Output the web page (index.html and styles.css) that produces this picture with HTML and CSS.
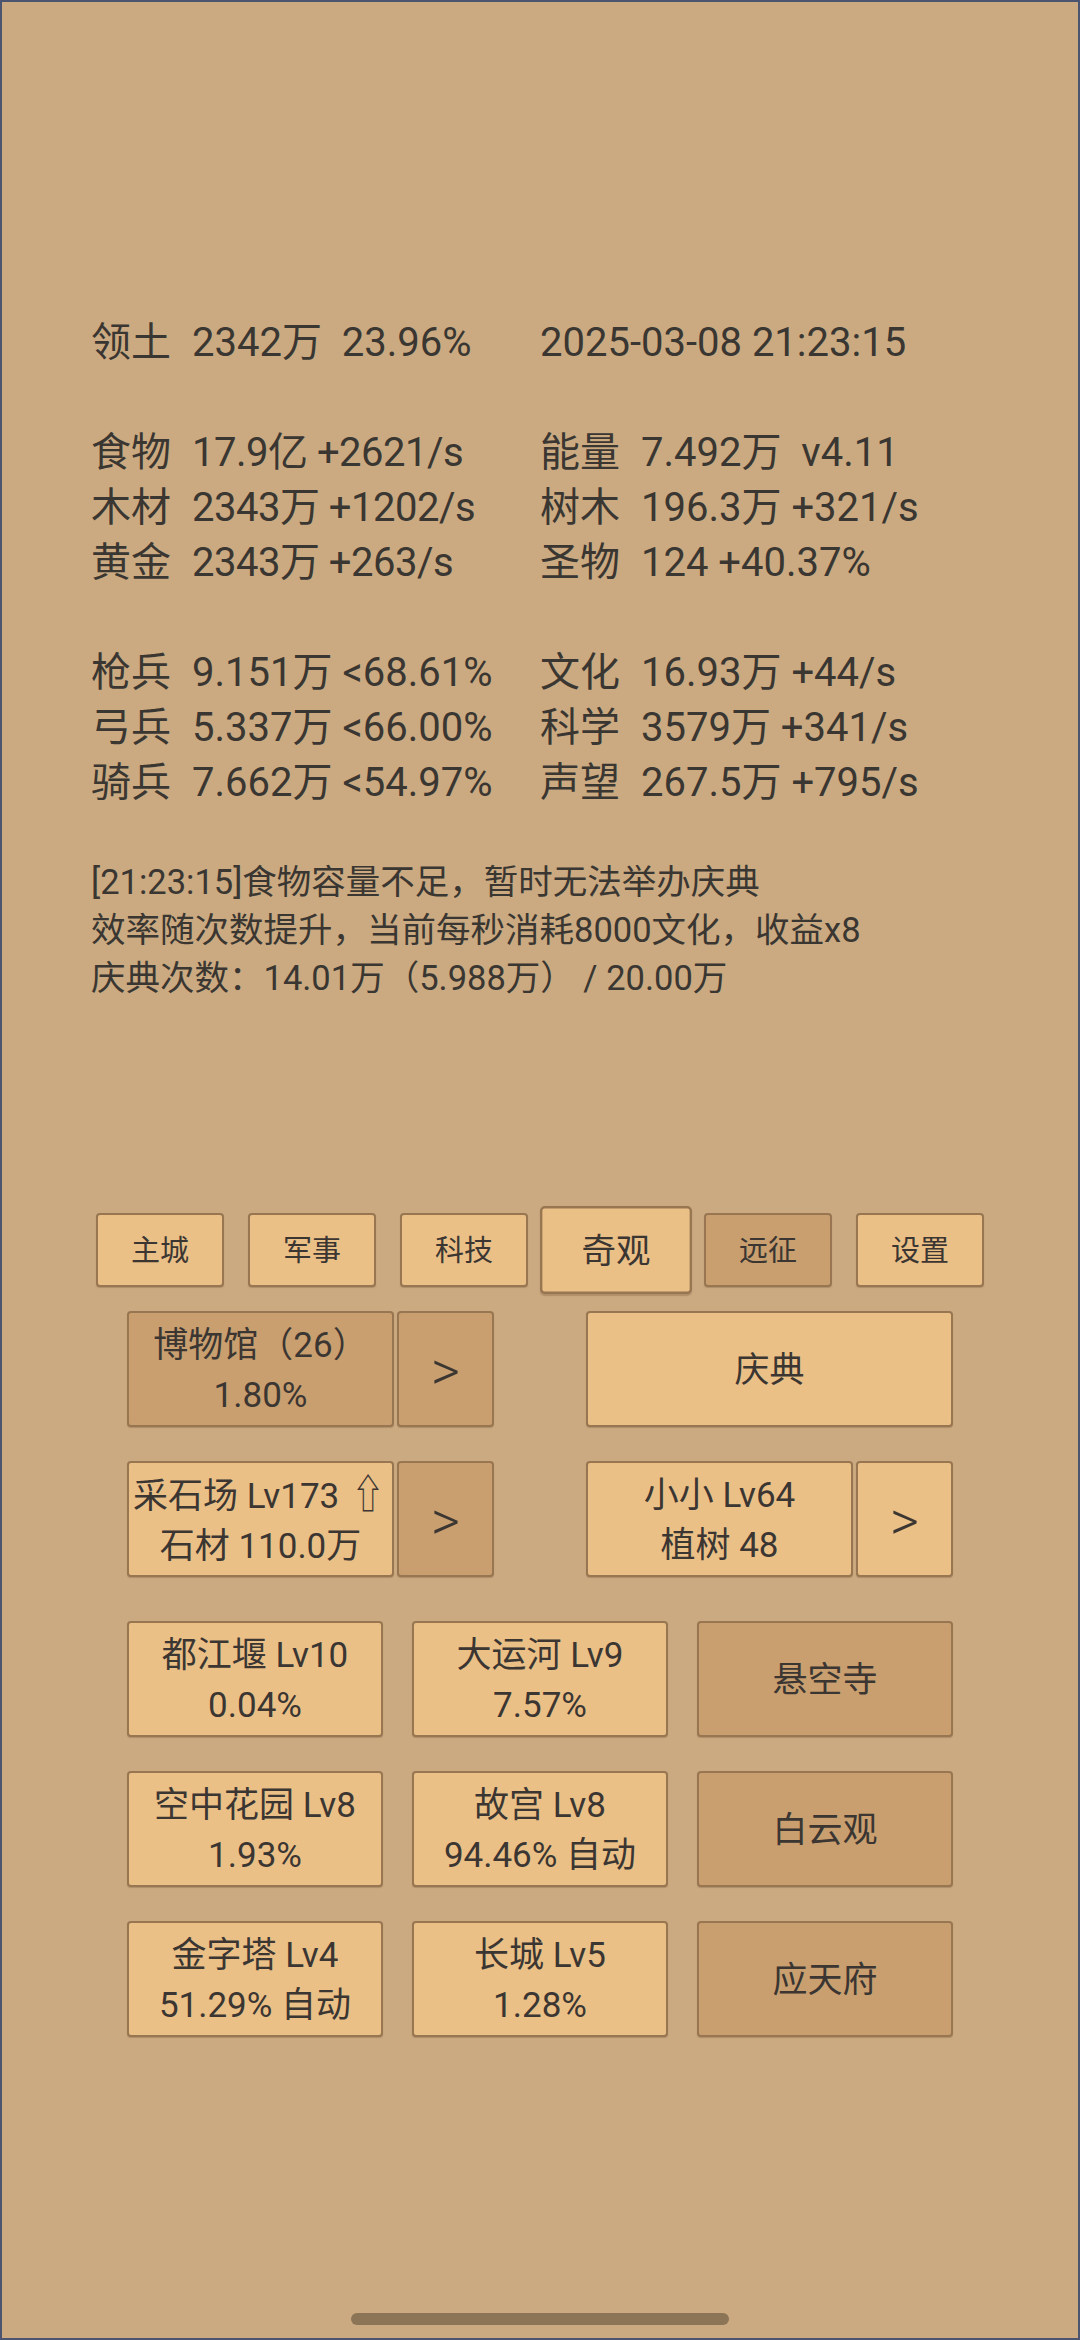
FILE: index.html
```html
<!DOCTYPE html>
<html lang="zh-CN">
<head>
<meta charset="utf-8">
<title>奇观</title>
<link rel="stylesheet" href="styles.css">
</head>
<body>
<div class="screen">
  <div class="stats">
    <div class="row">
      <div class="cell"><span class="lbl">领土</span><span class="val">2342万  23.96%</span></div>
      <div class="cell"><span class="val">2025-03-08 21:23:15</span></div>
    </div>
    <div class="row blank"></div>
    <div class="row">
      <div class="cell"><span class="lbl">食物</span><span class="val tight">17.9亿 +2621/s</span></div>
      <div class="cell"><span class="lbl">能量</span><span class="val">7.492万  v4.11</span></div>
    </div>
    <div class="row">
      <div class="cell"><span class="lbl">木材</span><span class="val tight">2343万 +1202/s</span></div>
      <div class="cell"><span class="lbl">树木</span><span class="val">196.3万 +321/s</span></div>
    </div>
    <div class="row">
      <div class="cell"><span class="lbl">黄金</span><span class="val tight">2343万 +263/s</span></div>
      <div class="cell"><span class="lbl">圣物</span><span class="val">124 +40.37%</span></div>
    </div>
    <div class="row blank"></div>
    <div class="row">
      <div class="cell"><span class="lbl">枪兵</span><span class="val">9.151万 &lt;68.61%</span></div>
      <div class="cell"><span class="lbl">文化</span><span class="val">16.93万 +44/s</span></div>
    </div>
    <div class="row">
      <div class="cell"><span class="lbl">弓兵</span><span class="val">5.337万 &lt;66.00%</span></div>
      <div class="cell"><span class="lbl">科学</span><span class="val">3579万 +341/s</span></div>
    </div>
    <div class="row">
      <div class="cell"><span class="lbl">骑兵</span><span class="val">7.662万 &lt;54.97%</span></div>
      <div class="cell"><span class="lbl">声望</span><span class="val">267.5万 +795/s</span></div>
    </div>
  </div>

  <div class="messages">
    <div class="msg">[21:23:15]食物容量不足，暂时无法举办庆典</div>
    <div class="msg">效率随次数提升，当前每秒消耗8000文化，收益x8</div>
    <div class="msg">庆典次数：14.01万（5.988万） / 20.00万</div>
  </div>

  <div class="tabs">
    <div class="slot"><div class="btn tab">主城</div></div>
    <div class="slot"><div class="btn tab">军事</div></div>
    <div class="slot"><div class="btn tab">科技</div></div>
    <div class="slot"><div class="btn tab selected">奇观</div></div>
    <div class="slot"><div class="btn tab dark">远征</div></div>
    <div class="slot"><div class="btn tab">设置</div></div>
  </div>

  <div class="pairs">
    <div class="pair-row">
      <div class="group">
        <div class="btn main dark"><span>博物馆（26）</span><span>1.80%</span></div>
        <div class="btn arrow dark">&gt;</div>
      </div>
      <div class="group">
        <div class="btn wide"><span>庆典</span></div>
      </div>
    </div>
    <div class="pair-row">
      <div class="group">
        <div class="btn main"><span>采石场 Lv173 <span class="up">⇧</span></span><span>石材 110.0万</span></div>
        <div class="btn arrow dark">&gt;</div>
      </div>
      <div class="group">
        <div class="btn main"><span>小小 Lv64</span><span>植树 48</span></div>
        <div class="btn arrow">&gt;</div>
      </div>
    </div>
  </div>

  <div class="wonders">
    <div class="btn"><span>都江堰 Lv10</span><span>0.04%</span></div>
    <div class="btn"><span>大运河 Lv9</span><span>7.57%</span></div>
    <div class="btn dark"><span>悬空寺</span></div>
    <div class="btn"><span>空中花园 Lv8</span><span>1.93%</span></div>
    <div class="btn"><span>故宫 Lv8</span><span>94.46% 自动</span></div>
    <div class="btn dark"><span>白云观</span></div>
    <div class="btn"><span>金字塔 Lv4</span><span>51.29% 自动</span></div>
    <div class="btn"><span>长城 Lv5</span><span>1.28%</span></div>
    <div class="btn dark"><span>应天府</span></div>
  </div>

  <div class="home-bar"></div>
</div>
</body>
</html>
```
FILE: styles.css
```css
html, body {
  margin: 0;
  padding: 0;
  background: #caa981;
}

.screen {
  position: relative;
  box-sizing: border-box;
  width: 1080px;
  height: 2340px;
  border: 2px solid #4c5470;
  background: #cbaa81;
  color: #3a3631;
  font-family: "Roboto", "Noto Sans CJK SC", sans-serif;
  display: flex;
  flex-direction: column;
  overflow: hidden;
}

.stats {
  margin-top: 313px;
  padding-left: 89px;
  font-size: 40px;
  line-height: 55px;
}

.row {
  display: grid;
  grid-template-columns: 449px 1fr;
  height: 55px;
}

.cell {
  white-space: pre;
}

.tight {
  letter-spacing: -0.5px;
}

.lbl {
  display: inline-block;
  width: 101px;
}

.messages {
  margin-top: 48px;
  padding-left: 89px;
  font-size: 34.5px;
  line-height: 48px;
}

.msg {
  white-space: pre;
}

.tabs {
  margin-top: 204px;
  display: flex;
  justify-content: center;
}

.slot {
  width: 152px;
  height: 88px;
  display: flex;
  align-items: center;
  justify-content: center;
}

.btn {
  box-sizing: border-box;
  background: #ebc087;
  border: 2px solid #977651;
  border-radius: 4px;
  box-shadow: 0 1px 1px rgba(90, 60, 30, 0.25);
  color: #3b3632;
  font-size: 35px;
  line-height: 50px;
  padding-top: 3px;
  display: flex;
  flex-direction: column;
  align-items: center;
  justify-content: center;
  text-align: center;
  white-space: nowrap;
}

.btn.dark {
  background: #c99f6f;
}

.tab {
  width: 128px;
  height: 74px;
  font-size: 29px;
  padding-top: 1px;
}

.tab.selected {
  transform: scale(1.1875);
}

.pairs {
  margin-top: 17px;
  display: flex;
  flex-direction: column;
  gap: 34px;
  width: 826px;
  align-self: center;
}

.pair-row {
  display: flex;
  justify-content: space-between;
  height: 116px;
}

.group {
  display: flex;
  gap: 3px;
  width: 367px;
}

.main {
  width: 267px;
  height: 116px;
}

.arrow {
  width: 97px;
  height: 116px;
  font-size: 56px;
  font-weight: 300;
}

.wide {
  width: 367px;
  height: 116px;
}

.up {
  font-family: "DejaVu Sans", sans-serif;
  font-size: 40px;
  font-weight: 300;
  display: inline-block;
  transform: scaleX(0.8);
}

.wonders {
  margin-top: 44px;
  width: 826px;
  align-self: center;
  display: grid;
  grid-template-columns: repeat(3, 1fr);
  grid-auto-rows: 116px;
  column-gap: 29px;
  row-gap: 34px;
}

.home-bar {
  position: absolute;
  left: 349px;
  bottom: 13px;
  width: 378px;
  height: 12px;
  border-radius: 6px;
  background: #8b7556;
}
```
